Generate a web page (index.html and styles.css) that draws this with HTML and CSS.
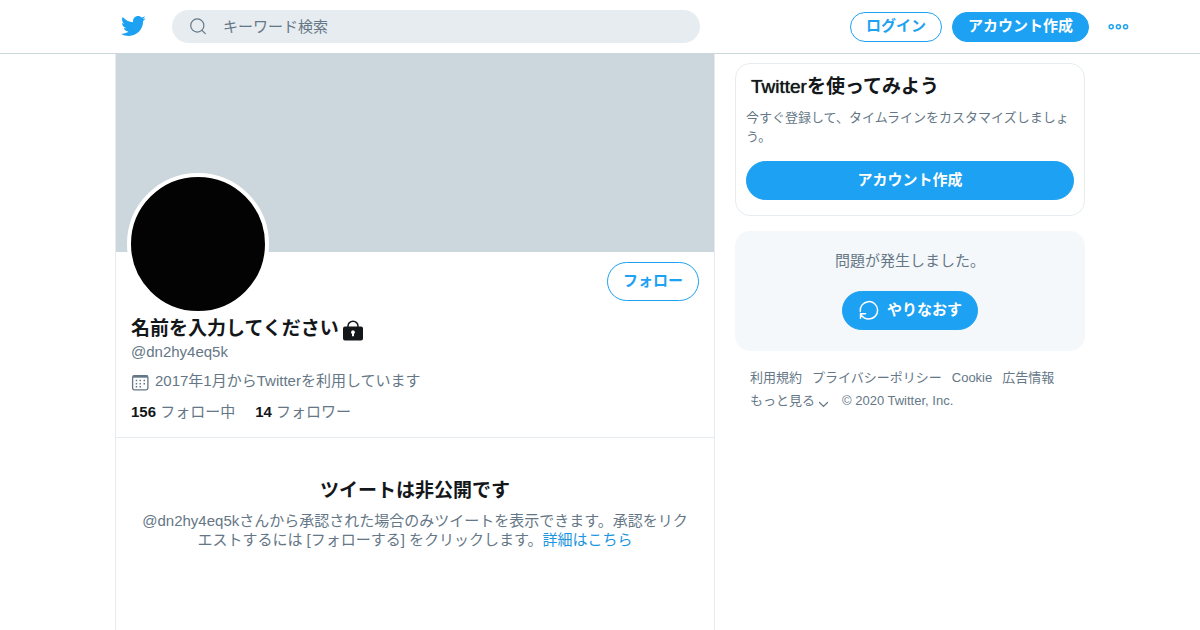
FILE: index.html
```html
<!DOCTYPE html>
<html lang="ja">
<head>
<meta charset="utf-8">
<meta name="viewport" content="width=device-width, initial-scale=1">
<title>Twitter</title>
<link rel="stylesheet" href="styles.css">
</head>
<body>
<header class="topbar">
  <div class="topbar-inner">
    <div class="topbar-main">
      <a class="logo" href="#" aria-label="Twitter">
        <svg viewBox="0 0 24 24" width="26" height="26" fill="currentColor"><path d="M23.643 4.937c-.835.37-1.732.62-2.675.733.962-.576 1.7-1.49 2.048-2.578-.9.534-1.897.922-2.958 1.13-.85-.904-2.06-1.47-3.4-1.47-2.572 0-4.658 2.086-4.658 4.66 0 .364.042.718.12 1.06-3.873-.195-7.304-2.05-9.602-4.868-.4.69-.63 1.49-.63 2.342 0 1.616.823 3.043 2.072 3.878-.764-.025-1.482-.234-2.11-.583v.06c0 2.257 1.605 4.14 3.737 4.568-.392.106-.803.162-1.227.162-.3 0-.593-.028-.877-.082.593 1.85 2.313 3.198 4.352 3.234-1.595 1.25-3.604 1.995-5.786 1.995-.376 0-.747-.022-1.112-.065 2.062 1.323 4.51 2.093 7.14 2.093 8.57 0 13.255-7.098 13.255-13.254 0-.2-.005-.402-.014-.602.91-.658 1.7-1.477 2.323-2.41z"/></svg>
      </a>
      <label class="search">
        <svg viewBox="0 0 20 20" width="20" height="20" fill="none" stroke="currentColor" stroke-width="1.2" stroke-linecap="round"><circle cx="8.300" cy="8.500" r="6.600"/><path d="M13 13.300l3.300 3.300"/></svg>
        <input type="search" placeholder="キーワード検索" aria-label="キーワード検索">
      </label>
    </div>
    <div class="topbar-actions">
      <button class="btn btn-outline btn-small" type="button">ログイン</button>
      <button class="btn btn-solid btn-small" type="button">アカウント作成</button>
      <button class="more" type="button" aria-label="もっと見る">
        <svg viewBox="0 0 21 8" width="21" height="8" fill="none" stroke="currentColor" stroke-width="1.5"><circle cx="3.2" cy="3.700" r="2"/><circle cx="10.4" cy="3.700" r="2"/><circle cx="17.6" cy="3.700" r="2"/></svg>
      </button>
    </div>
  </div>
</header>
<div class="page">
  <main class="column">
    <div class="banner"></div>
    <section class="profile">
      <div class="profile-top">
        <div class="avatar"></div>
        <button class="btn btn-outline" type="button">フォロー</button>
      </div>
      <h1 class="name">名前を入力してください
        <svg viewBox="0 0 24 24" width="24" height="24" fill="currentColor" aria-hidden="true"><path fill-rule="evenodd" d="M4 8.500h16a2 2 0 0 1 2 2V20.500a2 2 0 0 1-2 2H4a2 2 0 0 1-2-2v-10a2 2 0 0 1 2-2zM12 12.200a2 2 0 0 0-1 3.700V18.200h2V15.900a2 2 0 0 0-1-3.700z"/><path d="M7 9.500V8a5 4.800 0 0 1 10 0v1.500" fill="none" stroke="currentColor" stroke-width="1.500"/></svg>
      </h1>
      <p class="handle">@dn2hy4eq5k</p>
      <p class="joined">
        <svg viewBox="0 0 19 19" width="19" height="19" fill="currentColor" aria-hidden="true"><rect x="1.600" y="2.600" width="15.300" height="14.300" rx="1.800" fill="none" stroke="currentColor" stroke-width="1.300"/><path d="M2 2.500h15v2.200H2z"/><path d="M8.500 6.700h1.500v1.500H8.500zM12.500 6.700h1.500v1.500h-1.500zM4.700 6.700h1.500v1.500H4.700zM4.700 9.900h1.500v1.500H4.700zM8.500 9.900h1.500v1.500H8.500zM12.500 9.900h1.500v1.500h-1.500zM4.700 13.100h1.500v1.500H4.700zM8.500 13.100h1.500v1.500H8.500z"/></svg>
        <span>2017年1月からTwitterを利用しています</span>
      </p>
      <div class="counts">
        <a href="#"><b>156</b> フォロー中</a>
        <a href="#"><b>14</b> フォロワー</a>
      </div>
    </section>
    <section class="locked">
      <h2>ツイートは非公開です</h2>
      <p>@dn2hy4eq5kさんから承認された場合のみツイートを表示できます。承認をリクエストするには [フォローする] をクリックします。<a href="#">詳細はこちら</a></p>
    </section>
  </main>
  <aside class="sidebar">
    <section class="card">
      <h2><span class="brand">Twitter</span>を使ってみよう</h2>
      <p>今すぐ登録して、タイムラインをカスタマイズしましょう。</p>
      <button class="btn btn-solid" type="button">アカウント作成</button>
    </section>
    <section class="error">
      <p>問題が発生しました。</p>
      <button class="btn btn-solid" type="button">
        <svg viewBox="0 0 21 22" width="21" height="22" fill="none" stroke="currentColor" stroke-width="1.500" stroke-linecap="round" stroke-linejoin="round" aria-hidden="true"><path d="M2.300 12.500A8.700 8.700 0 1 1 10.800 20C7.500 20 4.500 18 2.500 14.800M2.500 19.300v-4.500h5"/></svg>
        やりなおす
      </button>
    </section>
    <nav class="links">
      <a href="#">利用規約</a>
      <a href="#">プライバシーポリシー</a>
      <a href="#">Cookie</a>
      <a href="#">広告情報</a>
      <a class="expand" href="#">もっと見る<svg viewBox="0 0 17 16" width="17" height="16" fill="none" stroke="currentColor" stroke-width="1.200" stroke-linecap="round" aria-hidden="true"><path d="M4.500 9.500l4 4 4-4"/></svg></a>
      <span>© 2020 Twitter, Inc.</span>
    </nav>
  </aside>
</div>
</body>
</html>
```
FILE: styles.css
```css
* {
  box-sizing: border-box;
}

body {
  margin: 0;
  background: #fff;
  color: #14171a;
  font-family: "Liberation Sans", "Noto Sans CJK JP", sans-serif;
  font-size: 15px;
  line-height: 20px;
}

h1,
h2,
p {
  margin: 0;
}

a {
  color: inherit;
  text-decoration: none;
}

svg {
  display: block;
  flex: none;
}

.topbar {
  border-bottom: 1px solid #ccd6dd;
}

.topbar-inner,
.page {
  display: grid;
  grid-template-columns: minmax(0, 600px) minmax(0, 350px);
  column-gap: 20px;
  max-width: 970px;
  margin: 0 auto;
}

.topbar-inner {
  height: 53px;
  align-items: center;
}

.topbar-main {
  display: flex;
  align-items: center;
  gap: 26px;
  padding: 0 15px 0 5px;
}

.logo {
  padding-bottom: 2px;
  color: #1da1f2;
}

.search {
  flex: 1;
  display: flex;
  align-items: center;
  gap: 14px;
  height: 33px;
  padding: 0 17px;
  border-radius: 17px;
  background: #e6ecf0;
  color: #657786;
}

.search input {
  flex: 1;
  min-width: 0;
  padding: 0;
  border: 0;
  outline: 0;
  background: none;
  color: inherit;
  font: inherit;
}

.search input::placeholder {
  color: #657786;
  opacity: 1;
}

.topbar-actions {
  display: flex;
  justify-content: flex-end;
  align-items: center;
  gap: 10px;
  margin-right: -44px;
}

.btn {
  display: inline-flex;
  align-items: center;
  justify-content: center;
  gap: 8px;
  height: 39px;
  padding: 0 15px 2px;
  border: 1px solid #1da1f2;
  border-radius: 20px;
  font-family: inherit;
  font-size: 15px;
  font-weight: 700;
  line-height: 20px;
  white-space: nowrap;
}

.btn-solid {
  background: #1da1f2;
  color: #fff;
}

.btn-outline {
  background: #fff;
  color: #1da1f2;
}

.btn-small {
  height: 30px;
  border-radius: 15px;
}

.more {
  padding: 8px 0;
  margin-left: 9px;
  border: 0;
  background: none;
  color: #1da1f2;
}

.column {
  min-height: calc(100vh - 54px);
  border: 1px solid #e6ecf0;
  border-width: 0 1px;
}

.banner {
  height: 198px;
  background: #ccd6dd;
}

.profile {
  padding: 10px 15px 15px;
  border-bottom: 1px solid #e6ecf0;
  color: #657786;
}

.profile-top {
  display: flex;
  justify-content: space-between;
  align-items: flex-start;
}

.avatar {
  width: 142px;
  height: 142px;
  margin: -89px 0 0 -4px;
  border: 4px solid #fff;
  border-radius: 50%;
  background: #030303;
}

.name {
  display: flex;
  align-items: center;
  gap: 2px;
  color: #14171a;
  font-size: 19px;
  line-height: 27px;
}

.name svg {
  margin-top: 3px;
}

.handle {
  margin-bottom: 7px;
}

.joined {
  display: flex;
  align-items: center;
  gap: 5px;
  margin-bottom: 10px;
}

.joined svg {
  margin-top: 4px;
}

.counts {
  display: flex;
  gap: 20px;
}

.counts b {
  color: #14171a;
}

.brand {
  font-weight: 400;
  text-shadow: 0 0 1px #14171a;
}

.locked {
  padding: 40px 20px;
  text-align: center;
  color: #657786;
}

.locked h2 {
  margin-bottom: 8px;
  color: #14171a;
  font-size: 19px;
  line-height: 25px;
}

.locked p {
  line-height: 19px;
}

.locked a {
  color: #1b95e0;
}

.sidebar {
  padding-top: 9px;
}

.card {
  display: flex;
  flex-direction: column;
  padding: 10px 10px 15px;
  border: 1px solid #e6ecf0;
  border-radius: 15px;
}

.card h2 {
  padding: 0 5px;
  font-size: 19px;
  line-height: 25px;
}

.card p {
  margin: 9px 0 15px;
  color: #657786;
  font-size: 13px;
  line-height: 19px;
}

.error {
  display: flex;
  flex-direction: column;
  align-items: center;
  gap: 20px;
  margin-top: 15px;
  padding: 20px 20px 21px;
  border-radius: 15px;
  background: #f5f8fa;
  color: #657786;
}

.links {
  display: flex;
  flex-wrap: wrap;
  gap: 3px 10px;
  padding: 17px 15px;
  color: #657786;
  font-size: 13px;
}

.expand {
  display: flex;
  align-items: center;
}
```
